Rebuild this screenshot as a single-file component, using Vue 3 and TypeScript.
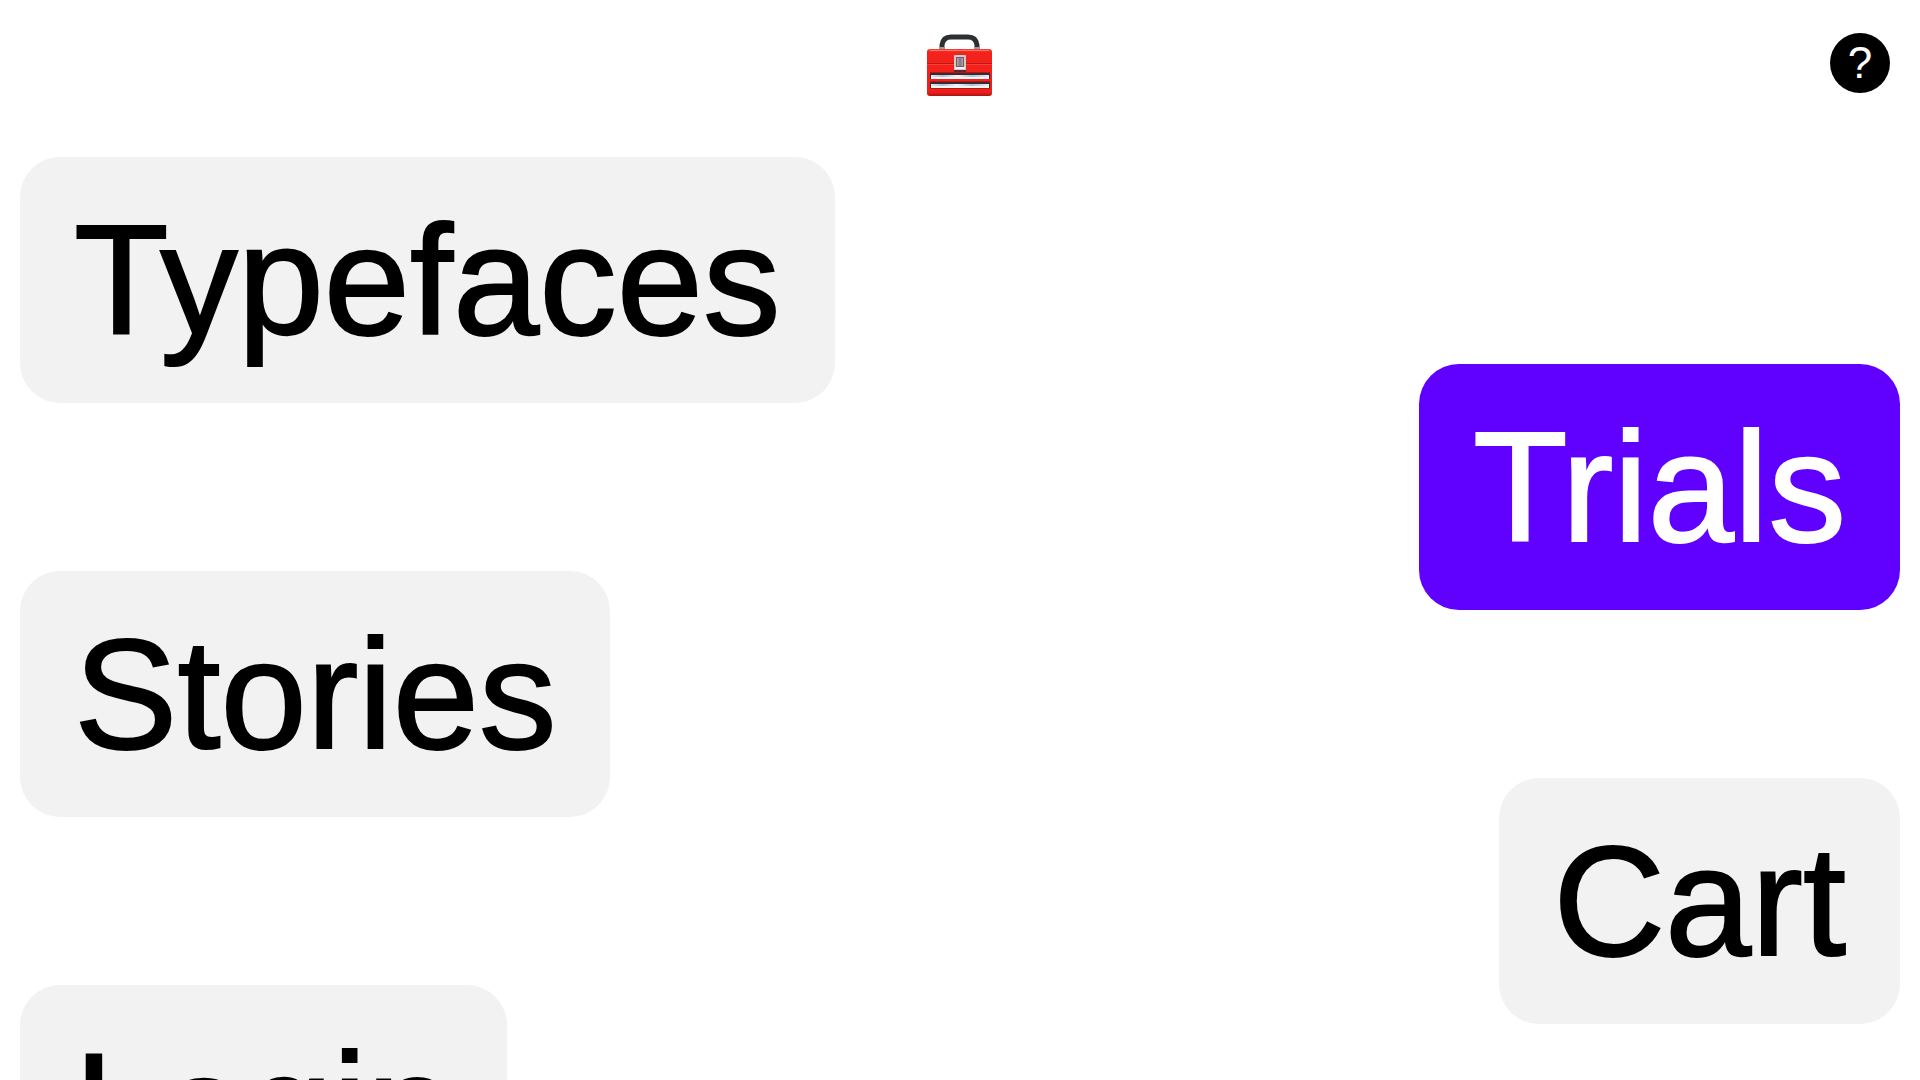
<script setup lang="ts">
interface MenuItem {
  label: string
  href: string
  active?: boolean
}

const items: MenuItem[] = [
  { label: 'Typefaces', href: '#typefaces' },
  { label: 'Trials', href: '#trials', active: true },
  { label: 'Stories', href: '#stories' },
  { label: 'Cart', href: '#cart' },
  { label: 'Login', href: '#login' },
]
</script>

<template>
  <div class="page">
    <header class="top">
      <a class="home" href="#home" aria-label="Home">
        <svg width="68" height="64" viewBox="0 0 68 64" aria-hidden="true">
          <defs>
            <linearGradient id="steel" x1="0" x2="1" y1="0" y2="0">
              <stop offset="0" stop-color="#dfe9f0" />
              <stop offset=".2" stop-color="#a9c3d6" />
              <stop offset=".45" stop-color="#f0f5f8" />
              <stop offset=".7" stop-color="#a9c3d6" />
              <stop offset="1" stop-color="#e6eef3" />
            </linearGradient>
            <linearGradient id="paint" x1="0" x2="0" y1="0" y2="1">
              <stop offset="0" stop-color="#e8453c" />
              <stop offset=".08" stop-color="#f4221d" />
              <stop offset=".92" stop-color="#ee1f1b" />
              <stop offset="1" stop-color="#a81411" />
            </linearGradient>
            <linearGradient id="latch" x1="0" x2="1" y1="0" y2="0">
              <stop offset="0" stop-color="#b9a9ae" />
              <stop offset=".5" stop-color="#85757b" />
              <stop offset="1" stop-color="#b3a4a9" />
            </linearGradient>
          </defs>
          <path d="M16 17v-5q1-8 9-8h17q8 0 9 8v5" fill="none" stroke="#2d3033" stroke-width="5" />
          <path d="M14 14h4v3h-4zM49 14h4v3h-4z" fill="#8f9da3" />
          <rect x="1" y="16" width="65" height="47" rx="3" fill="url(#paint)" />
          <path d="M4 17.500h59" stroke="#ff7067" stroke-width="1" />
          <path d="M1 30.500h65" stroke="#bd1815" stroke-width="1" />
          <path d="M1 31.500h65" stroke="#ff4038" stroke-width="1" />
          <path d="M4 39h60v7H4zM4 48h60v8H4z" fill="#b81613" />
          <path d="M4 40h60v6H4zM4 49h60v6H4z" fill="#3c2a30" />
          <path d="M5 42h58v2H5zM5 51h58v2H5z" fill="url(#steel)" />
          <path d="M5 44h58v2H5zM5 53h58v2H5z" fill="#f2f6f9" />
          <rect x="28" y="22" width="12" height="16" rx="1" fill="#d3c8cb" />
          <path d="M29 34h10v2H29z" fill="#f5f0f1" />
          <path d="M28 37h12v2H28z" fill="#642327" />
          <path d="M30 24h8v10h-8z" fill="#6d6066" />
          <path d="M31 25h6v8h-6z" fill="url(#latch)" />
        </svg>
      </a>
      <button class="help" type="button" aria-label="Help">?</button>
    </header>
    <nav class="menu" aria-label="Main">
      <a
        v-for="item in items"
        :key="item.label"
        class="entry"
        :class="{ active: item.active }"
        :href="item.href"
      >{{ item.label }}</a>
    </nav>
  </div>
</template>

<style>
body {
  margin: 0;
  background: #fff;
}
</style>

<style scoped>
.page {
  height: 100vh;
  overflow: hidden;
  font-family: "Liberation Sans", Arial, sans-serif;
  color: #000;
}

.top {
  display: grid;
  grid-template-columns: 1fr auto 1fr;
  align-items: center;
  padding: 33px 30px 64px;
}

.home {
  grid-column: 2;
  display: block;
  height: 60px;
}

.home svg {
  display: block;
}

.help {
  justify-self: end;
  width: 60px;
  height: 60px;
  padding: 0;
  border: 0;
  border-radius: 50%;
  background: #000;
  color: #fff;
  font: 44px/60px "Liberation Sans", Arial, sans-serif;
  cursor: pointer;
}

.menu {
  display: flex;
  flex-direction: column;
  align-items: flex-start;
  padding: 0 20px;
}

.entry {
  padding: 46px 54px 44px;
  border-radius: 40px;
  background: #f2f2f2;
  color: #000;
  font-size: 155px;
  line-height: 156px;
  -webkit-text-stroke: 2px currentColor;
  text-decoration: none;
}

.entry + .entry {
  margin-top: -39px;
}

.entry:nth-child(even) {
  align-self: flex-end;
}

.entry.active {
  background: #6000ff;
  color: #fff;
}
</style>
